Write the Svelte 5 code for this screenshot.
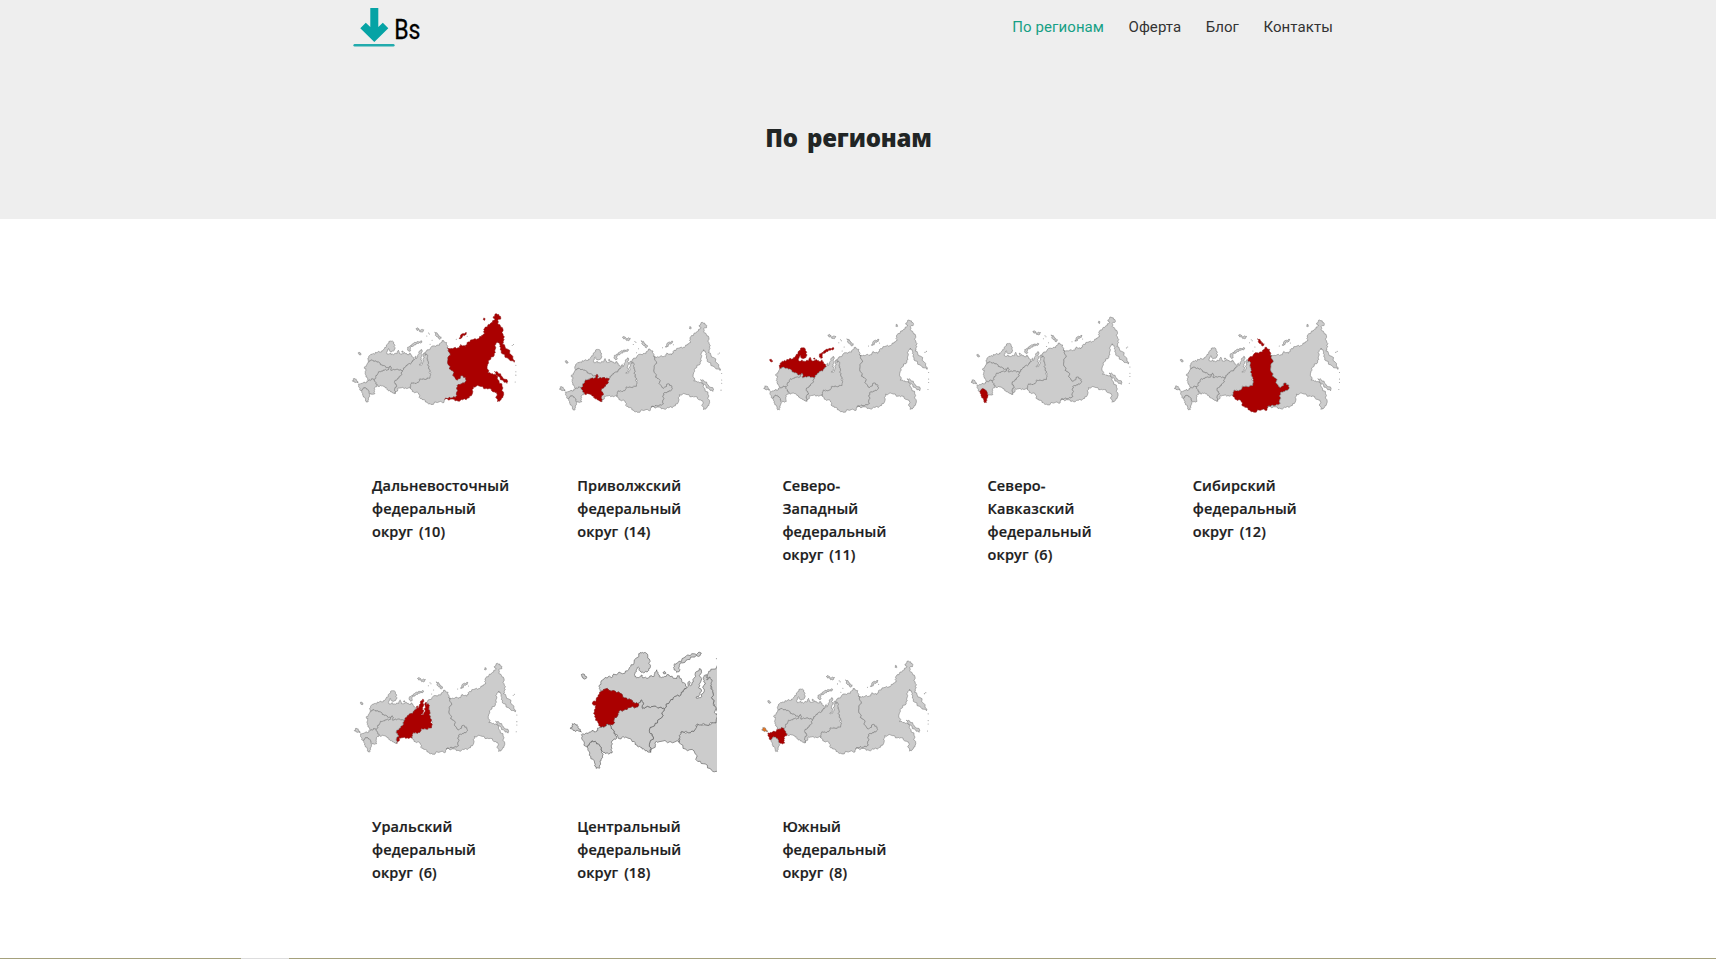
<script>
  const nav = ['По регионам', 'Оферта', 'Блог', 'Контакты'];

  // Western outlines are kept on a finer grid and brought to the common one here.
  const west = (s) => parse(s).map(([x, y]) => [x * 0.535 + 10.9, y * 0.5376 + 85]);
  const parse = (s) => s.trim().split(/\s+/).map((p) => p.split(',').map(Number));

  // Adds small bends to each edge; neighbours sharing an edge bend alike.
  function outline(points, rough = 0.14) {
    let d = '';
    points.forEach((a, i) => {
      const b = points[(i + 1) % points.length];
      const flip = a[0] > b[0] || (a[0] === b[0] && a[1] > b[1]);
      const [p, q] = flip ? [b, a] : [a, b];
      const mids = [0.28, 0.5, 0.76].map((t, k) => {
        const n = Math.sin(p[0] * 12.9 + p[1] * 78.2 + q[0] * 37.7 + q[1] * 9.1 + k * 4.3);
        const x = p[0] + (q[0] - p[0]) * t - (q[1] - p[1]) * n * rough;
        const y = p[1] + (q[1] - p[1]) * t + (q[0] - p[0]) * n * rough;
        return `L${x.toFixed(1)} ${y.toFixed(1)}`;
      });
      if (flip) mids.reverse();
      d += `${i ? 'L' : 'M'}${a[0].toFixed(1)} ${a[1].toFixed(1)}${mids.join('')}`;
    });
    return d + 'Z';
  }

  const shapes = [
    ['sib', parse('248,148 253,140 275,128 290,126 298,112 312,118 314,134 322,150 316,170 320,198 328,202 340,230 344,232 358,218 370,226 370,236 358,244 346,246 342,258 344,280 330,286 318,286 306,290 304,300 290,298 264,306 254,302 244,292 232,288 226,271 212,268 202,258 202,246 206,240 220,242 227,237 232,228 244,229 261,226 261,203 257,195 256,176 252,165')],
    ['far', parse('314,134 322,138 334,134 350,134 354,124 368,130 376,116 394,108 408,106 418,96 426,92 424,78 436,66 446,58 458,48 452,40 462,30 474,38 476,44 466,50 468,62 480,72 482,92 486,110 480,122 496,138 512,160 516,178 500,168 480,152 474,140 474,126 466,114 460,124 458,140 456,156 440,172 436,184 436,210 450,212 462,218 470,234 482,256 482,282 476,292 466,298 462,270 454,268 442,258 430,258 410,250 392,252 390,272 380,286 360,292 346,296 330,290 306,290 318,286 330,286 344,280 342,258 346,246 358,244 370,236 370,226 358,218 344,232 340,230 328,202 320,198 316,170 322,150')],
    ['nw', west('118,160 118,150 128,134 145,124 157,126 160,117 195,114 208,98 222,84 236,56 247,52 258,54 268,72 271,96 264,108 250,113 240,108 235,96 231,98 229,108 225,114 224,122 230,128 238,126 246,120 248,128 265,128 272,122 282,124 284,116 290,104 294,116 300,126 310,126 325,118 330,124 350,130 352,122 358,122 366,140 376,146 380,158 370,165 362,180 344,184 330,198 313,220 300,216 275,214 258,216 248,220 248,200 244,194 236,206 222,202 212,193 194,188 180,174 160,166 134,162 122,170')],
    ['ural', west('380,158 388,138 391,152 400,140 405,118 418,100 424,104 422,140 416,156 424,164 420,178 408,188 420,188 432,170 430,152 436,146 430,132 432,122 440,118 440,134 450,126 456,138 452,150 458,170 460,205 468,220 468,262 436,268 412,266 404,284 390,292 366,288 358,300 358,320 330,318 300,318 286,320 286,328 272,350 268,326 280,304 268,290 268,284 285,264 304,248 313,220 330,198 344,184 362,180 370,165')],
    ['volga', west('176,228 196,222 212,216 234,214 236,206 244,194 248,200 248,220 258,216 275,214 300,216 313,220 304,248 285,264 268,284 268,290 280,304 268,326 272,350 256,346 245,336 232,332 222,318 204,308 190,304 180,310 166,296 156,280 150,270 162,264 162,252 174,238')],
    ['central', west('134,162 160,166 180,174 194,188 212,193 222,202 236,206 234,214 212,216 196,222 176,228 174,238 162,252 162,264 150,270 143,266 134,274 122,276 114,262 104,244 103,224 108,212 97,206 98,200 108,196 114,180 122,170')],
    ['south', west('64,298 76,294 92,290 98,284 104,290 114,284 112,278 122,276 134,274 143,266 150,270 156,280 166,296 170,308 156,316 154,334 156,352 136,354 126,346 120,332 108,320 96,316 88,326 82,334 76,332 68,314')],
    ['cauc', west('82,334 88,326 96,316 108,320 120,332 126,346 128,366 120,376 120,396 108,398 104,382 92,362 84,344')],
    ['crimea', west('30,278 38,274 36,265 52,268 54,276 64,290 52,284 46,288 38,282')],
    ['nw', west('64,118 72,116 80,128 74,132 66,126')],
    ['nw', west('342,88 352,84 372,68 395,56 424,54 420,62 398,66 378,76 358,90 358,108 350,112 342,100')],
    ['nw', west('309,112 314,109 318,114 312,117')],
    ['sib', parse('276,86 284,90 288,98 296,102 292,108 280,98')],
    ['far', parse('350,104 358,92 372,88 370,94 360,97 358,104 350,106')],
    ['far', parse('456,206 466,208 480,222 496,236 494,242 480,232 464,218')],
    ['far', parse('424,43 428,45 427,50 423,49')],
    ['isles', parse('219,76 224,73 229,78 224,81')],
    ['isles', parse('229,82 236,78 243,79 240,85 232,86')]
  ].map(([id, pts]) => ({ id, d: outline(pts) }));

  const specks = [[510, 127], [514, 124], [521, 187], [521, 207], [521, 217], [519, 238], [262, 123], [268, 111], [252, 98], [257, 89], [341, 108], [374, 99], [260, 92]];

  // x, y: place of the outline's west tip and top; sx, sy: size.
  const regions = [
    { lines: ['Дальневосточный', 'федеральный', 'округ (10)'], on: 'far', x: 23, y: 26, sx: 0.993, sy: 0.986 },
    { lines: ['Приволжский', 'федеральный', 'округ (14)'], on: 'volga', x: 29, y: 52, sx: 0.986, sy: 0.978 },
    { lines: ['Северо-', 'Западный', 'федеральный', 'округ (11)'], on: 'nw', x: 27, y: 45, sx: 1.002, sy: 1.002 },
    { lines: ['Северо-', 'Кавказский', 'федеральный', 'округ (6)'], on: 'cauc', x: 31, y: 36, sx: 0.965, sy: 0.955 },
    { lines: ['Сибирский', 'федеральный', 'округ (12)'], on: 'sib', x: 26, y: 45, sx: 1.003, sy: 1.002 },
    { lines: ['Уральский', 'федеральный', 'округ (6)'], on: 'ural', x: 29, y: 52, sx: 0.987, sy: 0.988 },
    { lines: ['Центральный', 'федеральный', 'округ (18)'], on: 'central', x: 62, y: -136, sx: 1.869, sy: 1.87, cut: true },
    { lines: ['Южный', 'федеральный', 'округ (8)'], on: 'south', x: 21, y: 45, sx: 1.011, sy: 1.01 }
  ];

  const fill = (id, on) => (id === on ? '#aa0000' : id === 'crimea' && on === 'south' ? '#e8731c' : '#cccccc');
</script>

<div class="page">
  <header>
    <div class="bar">
      <svg class="logo" width="76" height="46" viewBox="0 0 76 46" aria-label="Bs">
        <path d="M17.300 0h8v19l4.500-4.200 5.500 5.400L21.300 34 7.300 20.200l5.500-5.400L17.300 19z" fill="#06a3a5" />
        <path d="M1.700 37.300h38.600" stroke="#22abad" stroke-width="2.500" stroke-linecap="round" />
        <text transform="translate(41.200 30.700) scale(0.840 1)" font-family="Roboto" font-size="27.500" fill="#000" stroke="#000" stroke-width="0.300">Bs</text>
      </svg>
      <nav>
        {#each nav as item, i}<a class:active={i === 0} href="#top">{item}</a>{/each}
      </nav>
    </div>
    <h1>По регионам</h1>
  </header>

  <main>
    {#each regions as r}
      <article>
        <svg class="map" width="180" height="140" viewBox="0 0 {r.cut ? 499 : 540} 420" preserveAspectRatio="xMinYMin slice" class:cut={r.cut}>
          <g transform="translate({r.x} {r.y}) scale({r.sx} {r.sy}) translate(-28 -30)">
            {#each shapes as s}
              <path d={s.d} fill={fill(s.id, r.on)} class:marked={s.id === r.on} />
            {/each}
            {#each specks as [x, y]}
              <circle cx={x} cy={y} r={r.cut ? 0.9 : 1.6} />
            {/each}
          </g>
        </svg>
        <h2>{#each r.lines as line}<span>{line}</span>{/each}</h2>
      </article>
    {/each}
  </main>
  <footer><i></i></footer>
</div>

<style>
  :global(body) { margin: 0; background: #fff; overflow: hidden; }
  .page { height: 959px; display: flex; flex-direction: column; color: #212529; }
  header { height: 219px; background: #eee; flex: none; }
  .bar { width: 980px; margin-left: 353px; height: 54px; display: flex; justify-content: space-between; align-items: flex-start; }
  .logo { margin-top: 8px; display: block; overflow: visible; }
  nav { display: flex; gap: 24.400px; padding-top: 15px; font: 15px/24px Roboto, sans-serif; letter-spacing: 0.090px; }
  a { color: #333; text-decoration: none; }
  a.active { color: #16a085; }
  h1 { margin: 66px 0 0; padding-right: 19px; text-align: center; font: 800 24px/36px "Open Sans", sans-serif; letter-spacing: -0.200px; word-spacing: 3px; color: #212525; }
  main { flex: 1; min-height: 0; display: grid; grid-template-columns: repeat(5, 205.200px); grid-auto-rows: 341px; padding: 86px 0 0 345px; box-sizing: border-box; }
  .map { display: block; overflow: hidden; }
  .map.cut { width: 166.330px; }
  .map path { stroke: #777; stroke-width: 0.550px; vector-effect: non-scaling-stroke; stroke-linejoin: round; }
  .map.cut path { stroke: #555; stroke-width: 0.600px; }
  .map path.marked, .map.cut path.marked { stroke: #8a1010; }
  .map circle { fill: #999; }
  h2 { margin: 28.500px 0 0 27px; font: 600 14.500px/23px "Open Sans", sans-serif; letter-spacing: 0.120px; word-spacing: 2px; color: #1c2020; -webkit-text-stroke: 0.200px #1c2020; }
  h2 span { display: block; }
  footer { flex: none; height: 1px; background: #a5a17c; }
  footer i { display: block; margin-left: 241px; width: 48px; height: 1px; background: #ddd; }
</style>
